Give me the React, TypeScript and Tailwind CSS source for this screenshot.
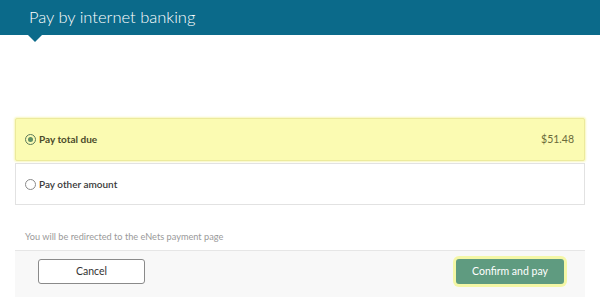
import React from "react";

export default function App() {
  return (
    <div className="w-[600px] h-[297px] overflow-hidden bg-white" style={{ fontFamily: "Lato, 'Open Sans', sans-serif" }}>
      <div className="relative h-[35px] bg-[#0b6a8a] pl-[29px] flex items-center">
        <span className="text-[16.5px] font-light text-white leading-none">Pay by internet banking</span>
        <div className="absolute left-[28px] top-[35px] w-0 h-0 border-l-[7px] border-r-[7px] border-t-[7px] border-l-transparent border-r-transparent border-t-[#0b6a8a]" />
      </div>
      <div className="mx-[15px] mt-[83px]">
        <div className="h-[43px] bg-[#fbfbb2] border border-[#ecea9c] rounded-[2px] flex items-center pl-[9px] pr-[10px] shadow-[0_0_2px_1px_#f8f7c0]">
          <span className="w-[11px] h-[11px] rounded-full border border-[#5c7a5a] flex items-center justify-center">
            <span className="w-[5px] h-[5px] rounded-full bg-[#5f8f64]" />
          </span>
          <span className="ml-[3px] text-[10px] font-bold text-[#4a4a2a]">Pay total due</span>
          <span className="ml-auto text-[10.5px] text-[#6a6a3a]">$51.48</span>
        </div>
        <div className="mt-[2px] h-[42px] bg-white border border-[#e2e2e2] flex items-center pl-[9px]">
          <span className="w-[11px] h-[11px] rounded-full border border-[#8a8a8a]" />
          <span className="ml-[3px] text-[10px] font-semibold text-[#3a3a3a]">Pay other amount</span>
        </div>
        <div className="mt-[27px] pl-[10px] text-[9.2px] text-[#9a9a9a] leading-none">You will be redirected to the eNets payment page</div>
        <div className="mt-[9px] h-[50px] bg-[#f8f8f8] border-t border-[#e6e6e6] flex items-start pt-[8px] pl-[23px] pr-[21px]">
          <button className="w-[107px] h-[25px] bg-white border border-[#8a8a8a] rounded-[3px] text-[10.5px] text-[#333]">Cancel</button>
          <button className="ml-auto w-[108px] h-[25px] bg-[#5f9b80] rounded-[3px] text-[10.5px] text-white shadow-[0_0_0_3px_#f4f7a6]">Confirm and pay</button>
        </div>
      </div>
    </div>
  );
}
